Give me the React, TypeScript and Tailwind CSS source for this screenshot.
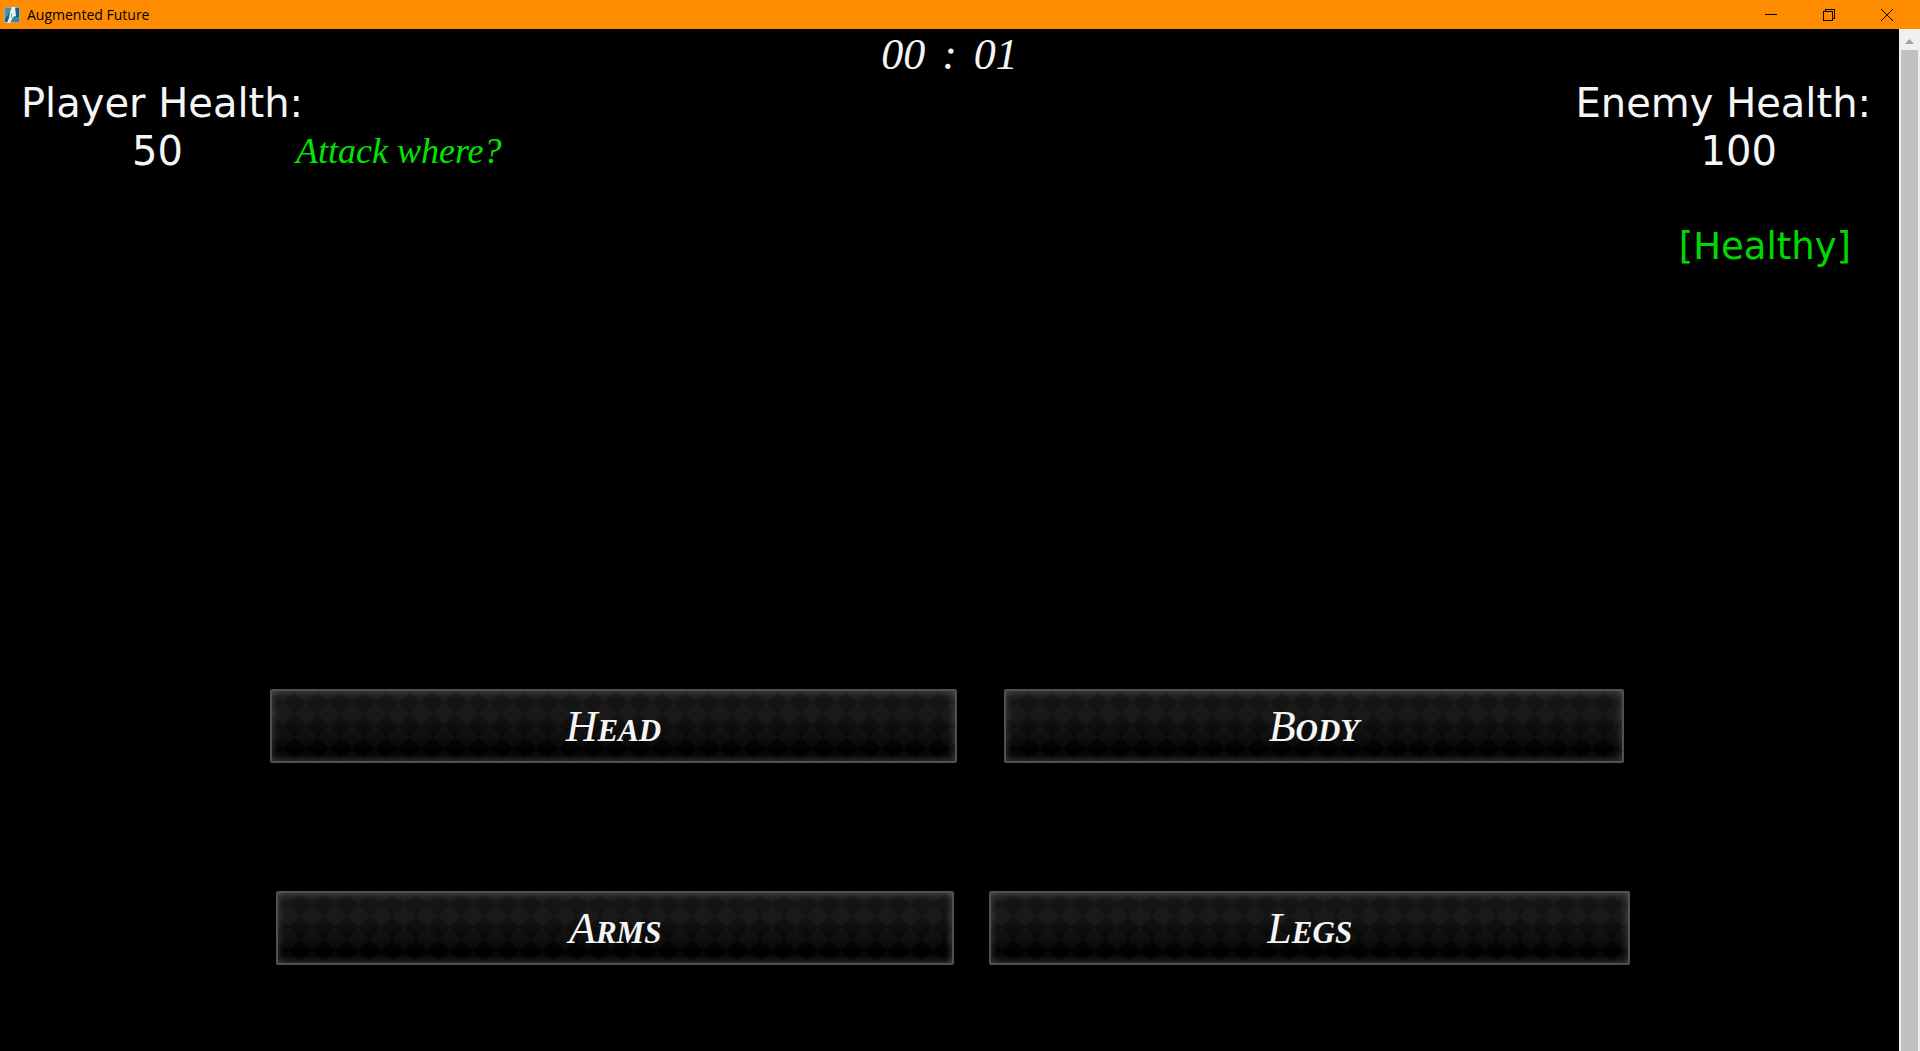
import type { ReactNode } from 'react';

const BUTTON_STYLE =
  'flex h-[74px] items-center justify-center rounded-[2px] border-2 border-[#505050] ' +
  'bg-[linear-gradient(45deg,rgba(255,255,255,0.028)_25%,transparent_25%_75%,rgba(255,255,255,0.028)_75%),linear-gradient(-45deg,rgba(255,255,255,0.028)_25%,transparent_25%_75%,rgba(255,255,255,0.028)_75%),linear-gradient(#161616,#121212_40%,#000_85%)] ' +
  'bg-size-[23px_23px,23px_23px,100%_100%] bg-position-[11px_0,11px_0,0_0] ' +
  'shadow-[inset_0_0_9px_rgba(255,255,255,0.25)]';

const LABEL_STYLE =
  'block pt-[2px] font-["Liberation_Serif",serif] text-[44px] leading-none font-bold text-[#f5f5f5] italic ' +
  '[font-variant-caps:small-caps] first-letter:font-normal';

function AttackButton({ children }: { children: ReactNode }) {
  return (
    <button type="button" className={BUTTON_STYLE}>
      <span className={LABEL_STYLE}>{children}</span>
    </button>
  );
}

function AppIcon() {
  return (
    <svg width="16" height="16" viewBox="0 0 16 16" aria-hidden="true">
      <rect width="16" height="16" rx="1" fill="#a3aaa2" />
      <rect x="1" y="1" width="14" height="14" fill="#17647b" />
      <path d="M1 1h7L2 11H1z" fill="#4c91a3" />
      <path d="M8 10h7v5H6z" fill="#3a8799" />
      <path d="M8 0h3l1 9-3 1-3 6H3l2-5 1-6z" fill="#eef4f3" />
      <path d="M7 11l1-5" stroke="#86a9ae" />
    </svg>
  );
}

function TitleBar() {
  return (
    <header className="flex h-[29px] shrink-0 items-center bg-[#ff8c00] pr-1 pl-1 text-black">
      <AppIcon />
      <h1 className="ml-[7px] grow font-['Open_Sans',sans-serif] text-[14px] leading-none">Augmented Future</h1>
      <button type="button" aria-label="Minimize" className="flex h-full w-[58px] items-center justify-center">
        <svg width="12" height="12" viewBox="0 0 12 12" shapeRendering="crispEdges">
          <path d="M0 5.5h12" stroke="currentColor" />
        </svg>
      </button>
      <button type="button" aria-label="Restore" className="flex h-full w-[58px] items-center justify-center">
        <svg width="12" height="12" viewBox="0 0 12 12" fill="none" stroke="currentColor" shapeRendering="crispEdges">
          <path d="M.5 2.5h9v9h-9zM2.5 2.5v-2h9v9h-2" />
        </svg>
      </button>
      <button type="button" aria-label="Close" className="flex h-full w-[58px] items-center justify-center">
        <svg width="12" height="12" viewBox="0 0 12 12" stroke="currentColor">
          <path d="M0 0l12 12M12 0L0 12" />
        </svg>
      </button>
    </header>
  );
}

function ScrollBar() {
  return (
    <div className="flex w-[21px] shrink-0 flex-col bg-[#f0f0f0]">
      <button type="button" aria-label="Scroll up" className="flex h-[21px] items-center justify-center">
        <svg width="9" height="5" viewBox="0 0 9 5" className="mt-1">
          <path d="M0 5L4.5 0L9 5z" fill="#a3a3a3" />
        </svg>
      </button>
      <div className="mr-[2px] ml-[2px] grow bg-[#c1c1c1]" />
    </div>
  );
}

export default function App() {
  return (
    <div className="flex h-screen flex-col bg-black">
      <TitleBar />
      <div className="flex min-h-0 grow">
        <main className="min-w-0 grow font-['DejaVu_Sans',sans-serif] text-[40px] leading-[48px] text-[#f5f5f5]">
          <p className="flex h-[50px] justify-center gap-[17px] pt-[2px] font-['Liberation_Serif',serif] text-[44px] italic">
            <span>00</span>
            <span>:</span>
            <span>01</span>
          </p>
          <div className="flex items-start justify-between pr-7 pl-[21px]">
            <section>
              <h2>Player Health:</h2>
              <div className="flex">
                <p className="w-[275px] pl-[111px]">50</p>
                <p className="font-['Liberation_Serif',serif] text-[36px] text-[#00e600] italic">Attack where?</p>
              </div>
            </section>
            <section className="flex flex-col">
              <h2>Enemy Health:</h2>
              <p className="pl-[125px]">100</p>
              <p className="mt-12 pr-5 text-right text-[37px] text-[#00d900]">[Healthy]</p>
            </section>
          </div>
          <div className="mt-[418px] grid grid-cols-[687fr_620fr] gap-[47px] pr-[275px] pl-[270px]">
            <AttackButton>Head</AttackButton>
            <AttackButton>Body</AttackButton>
          </div>
          <div className="mt-32 grid grid-cols-[679fr_641fr] gap-[35px] pr-[269px] pl-[276px]">
            <AttackButton>Arms</AttackButton>
            <AttackButton>Legs</AttackButton>
          </div>
        </main>
        <ScrollBar />
      </div>
    </div>
  );
}
